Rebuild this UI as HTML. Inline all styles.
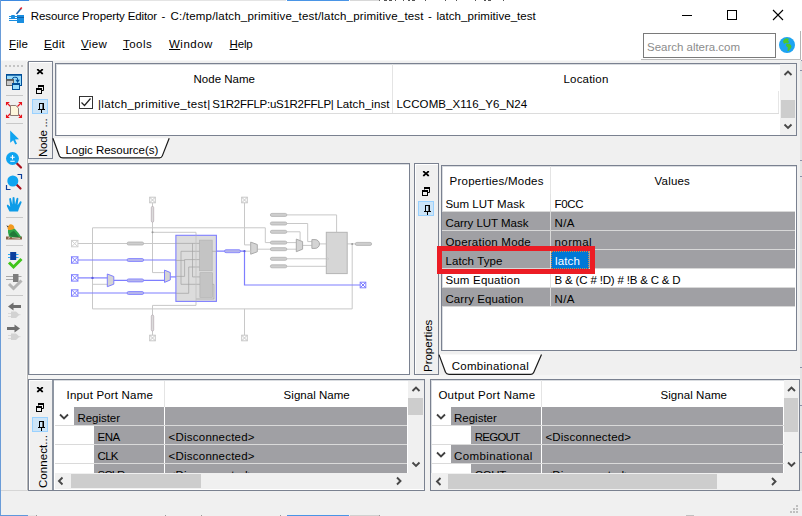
<!DOCTYPE html>
<html><head><meta charset="utf-8"><title>Resource Property Editor</title>
<style>
html,body{margin:0;padding:0;}
body{width:802px;height:516px;position:relative;overflow:hidden;background:#f0f0f0;font-family:"Liberation Sans",sans-serif;font-size:11.5px;}
.t{position:absolute;white-space:pre;line-height:14px;font-size:11.5px;}
.b{position:absolute;box-sizing:border-box;}
u{text-decoration:underline;text-underline-offset:1px;}
svg{position:absolute;left:0;top:0;overflow:visible;}
</style></head><body>
<div class="b" style="left:0px;top:0px;width:802px;height:61px;background:#fff"></div>
<div class="b" style="left:0px;top:60px;width:802px;height:1px;background:#f8f8f8"></div>
<div class="b" style="left:0px;top:0px;width:286px;height:1px;background:#e4e4e4"></div>
<div class="b" style="left:0px;top:0px;width:29px;height:1px;background:#3f8ae0"></div>
<div class="b" style="left:287px;top:0px;width:62px;height:1px;background:#4a95e6"></div>
<div class="b" style="left:350px;top:0px;width:29px;height:1px;background:#d8d8d8"></div>
<div class="b" style="left:379px;top:0px;width:1px;height:1px;background:#666"></div>
<div class="b" style="left:384px;top:0px;width:3px;height:1px;background:#555"></div>
<div class="b" style="left:389px;top:0px;width:3px;height:1px;background:#555"></div>
<div class="b" style="left:395px;top:0px;width:1px;height:1px;background:#555"></div>
<div class="b" style="left:403px;top:0px;width:1px;height:1px;background:#555"></div>
<div class="b" style="left:408px;top:0px;width:2px;height:1px;background:#555"></div>
<div class="b" style="left:412px;top:0px;width:3px;height:1px;background:#555"></div>
<div class="b" style="left:425px;top:0px;width:1px;height:1px;background:#555"></div>
<div class="b" style="left:445px;top:0px;width:1px;height:1px;background:#555"></div>
<div class="b" style="left:456px;top:0px;width:1px;height:1px;background:#555"></div>
<div class="b" style="left:475px;top:0px;width:1px;height:1px;background:#555"></div>
<div class="b" style="left:484px;top:0px;width:2px;height:1px;background:#555"></div>
<div class="b" style="left:488px;top:0px;width:3px;height:1px;background:#555"></div>
<div class="b" style="left:503px;top:0px;width:1px;height:1px;background:#555"></div>
<div class="b" style="left:0px;top:0px;width:1px;height:516px;background:#6a9cd8"></div>
<div class="b" style="left:1px;top:490px;width:27px;height:1px;background:#d6d6d6"></div>
<div class="b" style="left:26px;top:62px;width:1px;height:428px;background:#f8f8f8"></div>
<div class="b" style="left:27px;top:62px;width:1px;height:428px;background:#b8b8b8"></div>
<div class="b" style="left:0px;top:515px;width:28px;height:1px;background:#5f98dc"></div>
<div class="b" style="left:28px;top:515px;width:8px;height:1px;background:#e6e6e6"></div>
<div class="b" style="left:800px;top:31px;width:1px;height:29px;background:#b4b4b4"></div>
<div class="b" style="left:800px;top:60px;width:2px;height:431px;background:#e4e4e4"></div>
<div class="b" style="left:800px;top:60px;width:2px;height:1px;background:#8a8fa8"></div>
<div class="b" style="left:800px;top:70px;width:2px;height:1px;background:#8a8fa8"></div>
<div class="b" style="left:800px;top:160px;width:2px;height:1px;background:#8a8fa8"></div>
<div class="b" style="left:800px;top:176px;width:2px;height:1px;background:#8a8fa8"></div>
<div class="b" style="left:800px;top:367px;width:2px;height:1px;background:#8a8fa8"></div>
<div class="b" style="left:800px;top:405px;width:2px;height:1px;background:#8a8fa8"></div>
<div class="b" style="left:800px;top:452px;width:2px;height:1px;background:#8a8fa8"></div>
<div class="b" style="left:641px;top:59px;width:160px;height:1px;background:#bcbcbc"></div>
<div class="b" style="left:641px;top:60px;width:160px;height:1px;background:#f2f2f2"></div>
<span class="t" style="left:30.8px;top:9.0px;letter-spacing:-0.122px;color:#000;">Resource Property Editor</span>
<span class="t" style="left:161.4px;top:9.0px;letter-spacing:0.456px;color:#000;">-</span>
<span class="t" style="left:170.5px;top:9.0px;letter-spacing:0.198px;color:#000;">C:/temp/latch_primitive_test/latch_primitive_test</span>
<span class="t" style="left:428.0px;top:9.0px;letter-spacing:0.656px;color:#000;">-</span>
<span class="t" style="left:436.5px;top:9.0px;letter-spacing:0.043px;color:#000;">latch_primitive_test</span>
<span class="t" style="left:9.1px;top:36.8px;letter-spacing:0.092px;color:#000;"><u>F</u>ile</span>
<span class="t" style="left:44.1px;top:36.8px;letter-spacing:0.268px;color:#000;"><u>E</u>dit</span>
<span class="t" style="left:81.1px;top:36.8px;letter-spacing:0.295px;color:#000;"><u>V</u>iew</span>
<span class="t" style="left:122.9px;top:36.8px;letter-spacing:0.488px;color:#000;"><u>T</u>ools</span>
<span class="t" style="left:169.0px;top:36.8px;letter-spacing:0.482px;color:#000;"><u>W</u>indow</span>
<span class="t" style="left:229.6px;top:36.8px;letter-spacing:-0.189px;color:#000;"><u>H</u>elp</span>
<div class="b" style="left:643px;top:33px;width:133px;height:25px;border:1px solid #7a7a7a;background:#fff"></div>
<span class="t" style="left:647.0px;top:40.0px;letter-spacing:-0.019px;color:#8c8c8c;">Search altera.com</span>
<svg width="802" height="62" viewBox="0 0 802 62">
<path d="M682 15.5H692" stroke="#000" stroke-width="1" fill="none"/>
<rect x="727.5" y="10.5" width="9" height="9" stroke="#000" stroke-width="1" fill="none"/>
<path d="M773 10L783 20M783 10L773 20" stroke="#000" stroke-width="1.1" fill="none"/>
<!-- app icon -->
<path d="M16.5 14L21 8.5" stroke="#1c5fa8" stroke-width="1.6" fill="none"/>
<path d="M20.3 9.2L21.8 7.5" stroke="#e8242c" stroke-width="1.6" fill="none"/>
<rect x="17" y="15" width="7" height="8" fill="#1a8ee0"/>
<rect x="17" y="17" width="7" height="1" fill="#0e5fa8"/>
<path d="M9 16.5H17M9 18.5H17M9 20.5H17" stroke="#1a8ee0" stroke-width="1" fill="none"/>
<rect x="11" y="15" width="4" height="3.5" rx="1" fill="#1a8ee0"/>
<!-- globe -->
<circle cx="787" cy="45" r="8" fill="#1ea3f2"/>
<path d="M783 41.5Q783.500 39 786 38.300L789 38.800L788 40.500L789.300 42L787.500 43.500L785.500 43L784 44Z" fill="#4cc82c"/>
<path d="M786.300 44L789.500 43.800L791.500 46L791 48L788.500 51L787.500 51L787.800 47.500L786 46Z" fill="#4cc82c"/>
</svg>
<svg width="30" height="516" viewBox="0 0 30 516">
<rect x="5" y="65" width="2" height="2" fill="#c4c4c4"/>
<rect x="9" y="65" width="2" height="2" fill="#c4c4c4"/>
<rect x="13" y="65" width="2" height="2" fill="#c4c4c4"/>
<rect x="17" y="65" width="2" height="2" fill="#c4c4c4"/>
<rect x="21" y="65" width="2" height="2" fill="#c4c4c4"/>
<rect x="6" y="95" width="17" height="1" fill="#c8c8c8"/>
<rect x="6" y="123" width="17" height="1" fill="#c8c8c8"/>
<rect x="6" y="217" width="17" height="1" fill="#c8c8c8"/>
<rect x="6" y="245" width="17" height="1" fill="#c8c8c8"/>
<rect x="6" y="295" width="17" height="1" fill="#c8c8c8"/>
<rect x="6.500" y="74.500" width="15" height="11" fill="#9adcfb" stroke="#004e98" stroke-width="1"/>
<rect x="6" y="74" width="16" height="1.700" fill="#004e98"/>
<path d="M12.500 79Q12.500 77.300 14.500 77.300H16Q17.600 77.300 17.600 79V82.500" stroke="#004e98" stroke-width="1" fill="none"/>
<path d="M15.300 79.800H19.900L17.600 82.800Z" fill="#004e98"/>
<rect x="6.500" y="79.700" width="7" height="5.800" fill="#c8c8c8" stroke="#666" stroke-width="1"/>
<rect x="6" y="79.200" width="8" height="1.600" fill="#585858"/>
<rect x="12.500" y="83.500" width="7" height="6" fill="#9adcfb" stroke="#004e98" stroke-width="1"/>
<rect x="12" y="83" width="8" height="2" fill="#004e98"/>
<g stroke="#e8141c" stroke-width="1.100" fill="none">
<path d="M6.500 102.500l4 4M6.500 105.300v-2.800h2.800"/>
<path d="M21.500 102.500l-4 4M21.500 105.300v-2.800h-2.800"/>
<path d="M6.500 117.500l4-4M6.500 114.700v2.800h2.800"/>
<path d="M21.500 117.500l-4-4M21.500 114.700v2.800h-2.800"/>
</g>
<path d="M10.500 105.500H15.800L18.500 108.200V115.500H10.500Z" fill="#fdf6dc" stroke="#8c7b75" stroke-width="1"/>
<path d="M10.200 130.500V142.800L13.200 140.200L15.200 144.600L17 143.800L15 139.600L19 139.200Z" fill="#0fa4f0"/>
<path d="M16.500 163L21 167.500" stroke="#a8101c" stroke-width="2.200" stroke-linecap="round"/>
<circle cx="12.500" cy="158.500" r="6.500" fill="#0fa4f0"/>
<path d="M12.500 155v4.500M10.300 157.200h4.400M10.300 161.300h4.400" stroke="#fff" stroke-width="1.100" fill="none"/>
<path d="M16 184L20.500 188.500" stroke="#a8101c" stroke-width="2.200" stroke-linecap="round"/>
<circle cx="12.800" cy="181" r="5.500" fill="#0fa4f0"/>
<path d="M17.500 174.500h4v4.500M6.500 185v4.500h4" stroke="#0d3f9a" stroke-width="1.200" fill="none"/>
<path d="M9.500 211.500L7 206.500Q6.300 205 7.800 204.600L10.200 206.800L9.200 199Q9.600 197.600 10.900 198.200L12.300 204.500L12.600 197.600Q13.400 196.300 14.500 197.500L15 204.400L16.600 198.200Q17.800 197.300 18.400 198.600L17.600 205.200L20.200 201.300Q21.600 201 21.600 202.400L19 208.500L18 211.500Z" fill="#0d9ce8"/>
<path d="M6 236.500H22V239.500H6Z" fill="#8a6248"/>
<path d="M8 232.500Q7.500 227.500 11 227L15 229Q19 233 21.500 237.500L17 237Q12 238.500 9 236.500Z" fill="#2fa84a"/>
<path d="M9 235Q12 231 14 231Q17 234 19 237Q13 238 9 235Z" fill="#1f7a38"/>
<path d="M7.500 228.500Q8 224.500 11 224.300Q14 224.600 14.500 228.500Q11.500 230.500 8.500 230Z" fill="#f29a1e"/>
<path d="M6.300 225.300L8.500 226.200L7.800 227.500Z" fill="#333"/>
<path d="M10 237.500l-2 .8M12 237.700l8 .8" stroke="#e8dcd2" stroke-width=".8"/>
<path d="M8 254.500h2.500M8 257.500h2.500M16 254.500h2.500M16 257.500h2.500" stroke="#2aa8f2" stroke-width="1"/>
<rect x="10.200" y="252" width="6" height="8" fill="#0c3f9e"/>
<path d="M9 262.500L13.500 267L21.500 259" stroke="#3fc41a" stroke-width="3" fill="none"/>
<path d="M6 276.500h7M6 279.500h7M18 276.500h3.500" stroke="#a8a8a8" stroke-width="1"/>
<rect x="13" y="274" width="5.500" height="8" fill="#7c7c7c"/>
<path d="M9 284L13.500 288.500L21.500 280.500" stroke="#b4b4b4" stroke-width="3" fill="none"/>
<path d="M8 306.500L13.500 302.500V305H21V308H13.500V310.500Z" fill="#6e6e6e"/>
<path d="M11 311.500H16L19.500 314.700L16 318H11Z" fill="#d2d2d2"/>
<path d="M8 313.500h3M8 316.500h3M19 314.700h1.500" stroke="#d8d8d8" stroke-width="1"/>
<path d="M20 328.500L14.500 324.500V327H7V330H14.500V332.500Z" fill="#6e6e6e"/>
<path d="M11 333.500H16L19.500 336.700L16 340H11Z" fill="#d2d2d2"/>
<path d="M8 335.500h3M8 338.500h3M19 336.700h1.500" stroke="#d8d8d8" stroke-width="1"/>
</svg>
<div class="b" style="left:28px;top:61px;width:25px;height:98px;border:1px solid #7a8190;background:#f0f0f0;box-shadow:inset 1px 1px 0 #fff"></div>
<div class="b" style="left:32px;top:99px;width:16px;height:15px;background:#cce4f7;border:1px solid #99d1ff"></div>
<svg width="802" height="516" viewBox="0 0 802 516"><path d="M37.7 69.7L42.3 73.5M42.3 69.7L37.7 73.5" stroke="#000" stroke-width="1.700" fill="none"/><path d="M36.9 69.6H38.4M41.6 69.6H43.1M36.9 73.6H38.4M41.6 73.6H43.1" stroke="#000" stroke-width="1.2" fill="none"/><path d="M38.5 87.5V85.5H43.5V90.5H42" stroke="#000" stroke-width="1" fill="none"/><path d="M38 86.0H44" stroke="#000" stroke-width="2" fill="none"/><rect x="36.5" y="88.5" width="5" height="5" stroke="#000" stroke-width="1" fill="none"/><path d="M36 89.0H42" stroke="#000" stroke-width="2" fill="none"/><path d="M39 103.5H44M39.5 103.5V109.5M43.5 103.5V109.5M38 109.5H45M41.5 109.5V113" stroke="#000" stroke-width="1" fill="none"/><path d="M42.5 104V109" stroke="#6a6a6a" stroke-width="1" fill="none"/></svg>
<span class="t" style="left:35.5px;top:156.5px;letter-spacing:-0.223px;color:#000;transform-origin:0 0;transform:rotate(-90deg)">Node ...</span>
<div class="b" style="left:55px;top:63px;width:742px;height:73px;border:1px solid #7a8190;background:#fff;box-shadow:inset 1px 1px 0 #d9dce0"></div>
<div class="b" style="left:392px;top:64px;width:1px;height:49px;background:#e4e4e4"></div>
<div class="b" style="left:56px;top:113px;width:723px;height:1px;background:#dcdcdc"></div>
<div class="b" style="left:778px;top:91px;width:1px;height:22px;background:#e6e6e6"></div>
<span class="t" style="left:193.5px;top:71.5px;letter-spacing:0.014px;color:#000;">Node Name</span>
<span class="t" style="left:563.5px;top:71.5px;letter-spacing:0.189px;color:#000;">Location</span>
<span class="t" style="left:98.0px;top:97.0px;letter-spacing:0.368px;color:#000;">|latch_primitive_test|</span>
<span class="t" style="left:212.3px;top:97.0px;letter-spacing:-0.271px;color:#000;">S1R2FFLP:uS1R2FFLP|</span>
<span class="t" style="left:336.4px;top:97.0px;letter-spacing:0.076px;color:#000;">Latch_inst</span>
<span class="t" style="left:396.4px;top:97.0px;letter-spacing:0.074px;color:#000;">LCCOMB_X116_Y6_N24</span>
<div class="b" style="left:79px;top:96px;width:14px;height:13px;border:1px solid #333;background:#fff"></div>
<svg width="802" height="516" viewBox="0 0 802 516"><path d="M81.500 102.500L84.500 105.500L90.500 98.500" stroke="#222" stroke-width="1.200" fill="none"/></svg>
<div class="b" style="left:780px;top:64px;width:16px;height:71px;background:#f0f0f0"></div>
<div class="b" style="left:781px;top:100px;width:14px;height:18px;background:#cdcdcd"></div>
<svg width="802" height="516" viewBox="0 0 802 516"><path d="M784.5 75L788.0 71.5L791.5 75M784.5 124.5L788.0 128.0L791.5 124.5" stroke="#484848" stroke-width="1.900" fill="none"/></svg>
<svg width="802" height="516" viewBox="0 0 802 516"><path d="M52.9 138.2L59.4 155.9Q60.4 157.9 62.9 157.9H159.5Q161.5 157.9 162.3 155.9L169.2 138.2" stroke="#1a1a1a" stroke-width="1.200" fill="#fff"/></svg>
<span class="t" style="left:65.5px;top:142.5px;letter-spacing:-0.037px;color:#000;">Logic Resource(s)</span>
<div class="b" style="left:28px;top:163px;width:382px;height:212px;border:1px solid #7a8190;background:#fff;box-shadow:inset 1px 1px 0 #d9dce0"></div>
<svg width="802" height="516" viewBox="0 0 802 516">
<path d="M92.500 308.900V227.800H265.300V242.600H296.300" stroke="#c8c8c8" stroke-width="1" fill="none"/>
<path d="M92.500 308.900H352.200V243.900" stroke="#c8c8c8" stroke-width="1" fill="none"/>
<path d="M152.500 203V272.600H164.500" stroke="#c8c8c8" stroke-width="1" fill="none"/>
<path d="M152.500 232.300H196V305.400H152.500V335" stroke="#c8c8c8" stroke-width="1" fill="none"/>
<path d="M77.500 243.500H175.900" stroke="#c8c8c8" stroke-width="1" fill="none"/>
<path d="M92.500 284.300H107.900" stroke="#c8c8c8" stroke-width="1" fill="none"/>
<path d="M244.500 203V244.900H250.700" stroke="#c8c8c8" stroke-width="1" fill="none"/>
<path d="M244.500 308.900V335" stroke="#c8c8c8" stroke-width="1" fill="none"/>
<path d="M257.300 249.200H296.300" stroke="#c8c8c8" stroke-width="1" fill="none"/>
<path d="M286.800 214.900H336.600V232.300" stroke="#c8c8c8" stroke-width="1" fill="none"/>
<path d="M286.800 223.500H307.700V241.600H311.900" stroke="#c8c8c8" stroke-width="1" fill="none"/>
<path d="M286.800 231.800H300.100V240" stroke="#c8c8c8" stroke-width="1" fill="none"/>
<path d="M302.600 245.400H311.900" stroke="#c8c8c8" stroke-width="1" fill="none"/>
<path d="M319.500 243.900H326.300" stroke="#c8c8c8" stroke-width="1" fill="none"/>
<path d="M286.800 258.800H326.300" stroke="#c8c8c8" stroke-width="1" fill="none"/>
<path d="M286.800 266.300H326.300" stroke="#c8c8c8" stroke-width="1" fill="none"/>
<path d="M347.200 243.900H355.300" stroke="#c8c8c8" stroke-width="1" fill="none"/>
<rect x="175.900" y="235.300" width="40.500" height="66.100" fill="#dcdcdc" stroke="#7e7eff" stroke-width="1.100"/>
<rect x="199.400" y="240.100" width="12.800" height="30.700" fill="#c4c4c4" stroke="#b0b0b0" stroke-width=".6"/>
<rect x="199.900" y="272.700" width="12.700" height="24.700" fill="#c4c4c4" stroke="#b0b0b0" stroke-width=".6"/>
<path d="M175.800 243.400H199.400M192.500 243.400V276.900H199.900M181 284.300V251.300H199.400M181 284.300H199.900" stroke="#a2a2a2" stroke-width="0.7" fill="none"/>
<path d="M175.800 260.400H184.600M184.600 276.400V259.600H199.400M175.800 276.400H184.600M188.700 267H199.400M188.700 267V293.300M175.800 293.300H188.700" stroke="#a2a2a2" stroke-width="0.7" fill="none"/>
<path d="M212.600 284.300H213.900V299H196M212.200 251.300H216.300" stroke="#a2a2a2" stroke-width="0.7" fill="none"/>
<path d="M196 235.300V301.400" stroke="#c0c0c0" stroke-width="0.8" fill="none"/>
<rect x="326.300" y="232.300" width="20.900" height="41.300" fill="#d6d6d6" stroke="#b4b4b4" stroke-width="1"/>
<path d="M326.300 257L329 258.800L326.300 260.600" stroke="#c8c8c8" stroke-width="0.8" fill="none"/>
<path d="M250.7 242.1L257.3 244.51999999999998V251.78L250.7 254.2Z" fill="#d4d4d4" stroke="#aaa" stroke-width="1"/>
<path d="M296.3 239.1L302.6 241.62V249.17999999999998L296.3 251.7Z" fill="#d4d4d4" stroke="#aaa" stroke-width="1"/>
<path d="M311.900 239.600H315.100A4.400 4.400 0 0 1 315.100 248.400H311.900Z" fill="#d4d4d4" stroke="#aaa" stroke-width="1"/>
<rect x="270.4" y="213.4" width="16.400000000000034" height="3" rx="1.500" fill="#cecece" stroke="#b0b0b0" stroke-width=".8"/>
<rect x="270.4" y="222.0" width="16.400000000000034" height="3" rx="1.500" fill="#cecece" stroke="#b0b0b0" stroke-width=".8"/>
<rect x="270.4" y="230.3" width="16.400000000000034" height="3" rx="1.500" fill="#cecece" stroke="#b0b0b0" stroke-width=".8"/>
<rect x="270.4" y="241.1" width="16.400000000000034" height="3" rx="1.500" fill="#cecece" stroke="#b0b0b0" stroke-width=".8"/>
<rect x="270.4" y="247.7" width="16.400000000000034" height="3" rx="1.500" fill="#cecece" stroke="#b0b0b0" stroke-width=".8"/>
<rect x="270.4" y="257.3" width="16.400000000000034" height="3" rx="1.500" fill="#cecece" stroke="#b0b0b0" stroke-width=".8"/>
<rect x="270.4" y="264.8" width="16.400000000000034" height="3" rx="1.500" fill="#cecece" stroke="#b0b0b0" stroke-width=".8"/>
<rect x="355.3" y="242.4" width="16.30000000000001" height="3" rx="1.500" fill="#cecece" stroke="#b0b0b0" stroke-width=".8"/>
<rect x="127.1" y="242.0" width="16.5" height="3" rx="1.500" fill="#cecece" stroke="#b0b0b0" stroke-width=".8"/>
<rect x="151.3" y="206.4" width="2.400" height="15.799999999999983" rx="1.200" fill="#dcdcdc" stroke="#b4a8b0" stroke-width=".7"/>
<rect x="151.3" y="315" width="2.400" height="16" rx="1.200" fill="#dcdcdc" stroke="#b4a8b0" stroke-width=".7"/>
<path d="M77.500 260H175.900" stroke="#7e7eff" stroke-width="1.2" fill="none"/>
<path d="M77.500 277.900H107.900" stroke="#7e7eff" stroke-width="1.2" fill="none"/>
<path d="M113.800 280.400H164.500" stroke="#7e7eff" stroke-width="1.2" fill="none"/>
<path d="M77.500 293H175.900" stroke="#7e7eff" stroke-width="1.2" fill="none"/>
<path d="M170.300 276.900H175.900" stroke="#7e7eff" stroke-width="1.2" fill="none"/>
<path d="M216.700 251.200H244.500V285H360" stroke="#7e7eff" stroke-width="1.2" fill="none"/>
<path d="M244.500 251.200H250.700" stroke="#c8c8c8" stroke-width="1" fill="none"/>
<path d="M107.3 274L113.8 276.54V284.15999999999997L107.3 286.7Z" fill="#d4d4d4" stroke="#7e7eff" stroke-width="1"/>
<path d="M164.5 270.1L170.3 272.56V279.94L164.5 282.4Z" fill="#d4d4d4" stroke="#7e7eff" stroke-width="1"/>
<rect x="127.1" y="258.5" width="16.5" height="3" rx="1.500" fill="#b4b4ec" stroke="#7e7eff" stroke-width=".8"/>
<rect x="127.1" y="278.9" width="16.5" height="3" rx="1.500" fill="#b4b4ec" stroke="#7e7eff" stroke-width=".8"/>
<rect x="127.1" y="291.5" width="16.5" height="3" rx="1.500" fill="#b4b4ec" stroke="#7e7eff" stroke-width=".8"/>
<rect x="224.5" y="249.7" width="16.0" height="3" rx="1.500" fill="#b4b4ec" stroke="#7e7eff" stroke-width=".8"/>
<circle cx="92.500" cy="277.900" r="1.200" fill="#5a5ae0"/><circle cx="152.500" cy="232.300" r="1" fill="#999"/><circle cx="352.200" cy="243.900" r="1" fill="#999"/><circle cx="244.500" cy="251.200" r="1.100" fill="#5a5ae0"/>
<rect x="71.5" y="240.4" width="6.4" height="6.4" fill="#fff" stroke="#d0d0d0" stroke-width="1"/><path d="M71.5 240.4L77.9 246.79999999999998M77.9 240.4L71.5 246.79999999999998" stroke="#d0d0d0" stroke-width="1" fill="none"/>
<rect x="71.5" y="256.8" width="6.4" height="6.4" fill="#fff" stroke="#7e7eff" stroke-width="1"/><path d="M71.5 256.8L77.9 263.2M77.9 256.8L71.5 263.2" stroke="#7e7eff" stroke-width="1" fill="none"/>
<rect x="71.5" y="274.7" width="6.4" height="6.4" fill="#fff" stroke="#7e7eff" stroke-width="1"/><path d="M71.5 274.7L77.9 281.09999999999997M77.9 274.7L71.5 281.09999999999997" stroke="#7e7eff" stroke-width="1" fill="none"/>
<rect x="71.5" y="289.8" width="6.4" height="6.4" fill="#fff" stroke="#7e7eff" stroke-width="1"/><path d="M71.5 289.8L77.9 296.2M77.9 289.8L71.5 296.2" stroke="#7e7eff" stroke-width="1" fill="none"/>
<rect x="149.7" y="197.2" width="5.6" height="5.6" fill="#fff" stroke="#c8c8c8" stroke-width="1"/><path d="M149.7 197.2L155.3 202.8M155.3 197.2L149.7 202.8" stroke="#c8c8c8" stroke-width="1" fill="none"/>
<rect x="241.7" y="197.2" width="5.6" height="5.6" fill="#fff" stroke="#c8c8c8" stroke-width="1"/><path d="M241.7 197.2L247.3 202.8M247.3 197.2L241.7 202.8" stroke="#c8c8c8" stroke-width="1" fill="none"/>
<rect x="149.7" y="335.2" width="5.6" height="5.6" fill="#fff" stroke="#c8c8c8" stroke-width="1"/><path d="M149.7 335.2L155.3 340.8M155.3 335.2L149.7 340.8" stroke="#c8c8c8" stroke-width="1" fill="none"/>
<rect x="241.7" y="335.2" width="5.6" height="5.6" fill="#fff" stroke="#c8c8c8" stroke-width="1"/><path d="M241.7 335.2L247.3 340.8M247.3 335.2L241.7 340.8" stroke="#c8c8c8" stroke-width="1" fill="none"/>
<rect x="360.2" y="282.2" width="5.6" height="5.6" fill="#fff" stroke="#7e7eff" stroke-width="1"/><path d="M360.2 282.2L365.8 287.8M365.8 282.2L360.2 287.8" stroke="#7e7eff" stroke-width="1" fill="none"/>
</svg>
<div class="b" style="left:414px;top:163px;width:25px;height:212px;border:1px solid #7a8190;background:#f0f0f0;box-shadow:inset 1px 1px 0 #fff"></div>
<div class="b" style="left:418px;top:201px;width:16px;height:15px;background:#cce4f7;border:1px solid #99d1ff"></div>
<svg width="802" height="516" viewBox="0 0 802 516"><path d="M423.7 171.7L428.3 175.5M428.3 171.7L423.7 175.5" stroke="#000" stroke-width="1.700" fill="none"/><path d="M422.9 171.6H424.4M427.6 171.6H429.1M422.9 175.6H424.4M427.6 175.6H429.1" stroke="#000" stroke-width="1.2" fill="none"/><path d="M424.5 189.5V187.5H429.5V192.5H428" stroke="#000" stroke-width="1" fill="none"/><path d="M424 188.0H430" stroke="#000" stroke-width="2" fill="none"/><rect x="422.5" y="190.5" width="5" height="5" stroke="#000" stroke-width="1" fill="none"/><path d="M422 191.0H428" stroke="#000" stroke-width="2" fill="none"/><path d="M425 205.5H430M425.5 205.5V211.5M429.5 205.5V211.5M424 211.5H431M427.5 211.5V215" stroke="#000" stroke-width="1" fill="none"/><path d="M428.5 206V211" stroke="#6a6a6a" stroke-width="1" fill="none"/></svg>
<span class="t" style="left:421.0px;top:372.3px;letter-spacing:-0.012px;color:#000;transform-origin:0 0;transform:rotate(-90deg)">Properties</span>
<div class="b" style="left:441px;top:165px;width:356px;height:186px;border:1px solid #7a8190;background:#fff;box-shadow:inset 1px 1px 0 #d9dce0"></div>
<div class="b" style="left:550px;top:193px;width:1px;height:18px;background:#e0e0e0"></div>
<span class="t" style="left:445.4px;top:197.0px;letter-spacing:0.022px;color:#000;">Sum LUT Mask</span>
<span class="t" style="left:554.6px;top:197.0px;letter-spacing:-0.333px;color:#000;">F0CC</span>
<div class="b" style="left:442px;top:211px;width:353px;height:20px;background:#d8d8d8"></div>
<div class="b" style="left:442px;top:212px;width:108px;height:18px;background:#a0a0a4"></div>
<div class="b" style="left:551px;top:212px;width:244px;height:18px;background:#a0a0a4"></div>
<span class="t" style="left:445.4px;top:216.0px;letter-spacing:-0.036px;color:#000;">Carry LUT Mask</span>
<span class="t" style="left:554.6px;top:216.0px;letter-spacing:0.276px;color:#000;">N/A</span>
<div class="b" style="left:442px;top:230px;width:353px;height:20px;background:#d8d8d8"></div>
<div class="b" style="left:442px;top:231px;width:108px;height:18px;background:#a0a0a4"></div>
<div class="b" style="left:551px;top:231px;width:244px;height:18px;background:#a0a0a4"></div>
<span class="t" style="left:445.4px;top:235.0px;letter-spacing:0.224px;color:#000;">Operation Mode</span>
<span class="t" style="left:554.6px;top:235.0px;letter-spacing:0.374px;color:#000;">normal</span>
<div class="b" style="left:442px;top:249px;width:353px;height:20px;background:#d8d8d8"></div>
<div class="b" style="left:442px;top:250px;width:108px;height:18px;background:#a0a0a4"></div>
<div class="b" style="left:551px;top:250px;width:244px;height:18px;background:#a0a0a4"></div>
<span class="t" style="left:445.4px;top:254.0px;letter-spacing:0.114px;color:#000;">Latch Type</span>
<div class="b" style="left:551px;top:251px;width:38px;height:18px;background:#0078d7;border:1px dotted #d08848"></div>
<span class="t" style="left:555.0px;top:254.0px;letter-spacing:0.141px;color:#fff;">latch</span>
<div class="b" style="left:550px;top:269px;width:1px;height:18px;background:#e0e0e0"></div>
<span class="t" style="left:445.4px;top:273.0px;letter-spacing:0.196px;color:#000;">Sum Equation</span>
<span class="t" style="left:554.6px;top:273.0px;letter-spacing:-0.179px;color:#000;">B &amp; (C # !D) # !B &amp; C &amp; D</span>
<div class="b" style="left:442px;top:287px;width:353px;height:20px;background:#d8d8d8"></div>
<div class="b" style="left:442px;top:288px;width:108px;height:18px;background:#a0a0a4"></div>
<div class="b" style="left:551px;top:288px;width:244px;height:18px;background:#a0a0a4"></div>
<span class="t" style="left:445.4px;top:292.0px;letter-spacing:0.099px;color:#000;">Carry Equation</span>
<span class="t" style="left:554.6px;top:292.0px;letter-spacing:0.276px;color:#000;">N/A</span>
<div class="b" style="left:550px;top:166px;width:1px;height:28px;background:#e4e4e4"></div>
<span class="t" style="left:449.5px;top:173.5px;letter-spacing:0.255px;color:#000;">Properties/Modes</span>
<span class="t" style="left:654.6px;top:173.6px;letter-spacing:0.181px;color:#000;">Values</span>
<div class="b" style="left:437px;top:246px;width:158px;height:28px;border:5px solid #ec1c24"></div>
<svg width="802" height="516" viewBox="0 0 802 516"><path d="M439 354.6L445.5 372.3Q446.5 374.3 449 374.3H531Q533 374.3 533.8 372.3L541.5 354.6" stroke="#1a1a1a" stroke-width="1.200" fill="#fff"/></svg>
<span class="t" style="left:451.7px;top:358.7px;letter-spacing:0.291px;color:#000;">Combinational</span>
<div class="b" style="left:28px;top:375px;width:772px;height:4px;background:#f5f5f5"></div>
<div class="b" style="left:28px;top:379px;width:397px;height:112px;border:1px solid #7a8190;background:#fff;box-shadow:inset 1px 1px 0 #d9dce0"></div>
<div class="b" style="left:29px;top:380px;width:23px;height:110px;background:#f0f0f0;box-shadow:inset 1px 1px 0 #fff"></div>
<div class="b" style="left:52px;top:380px;width:2px;height:110px;background:#8e96a2"></div>
<div class="b" style="display:none;left:-100px;top:380px;width:25px;height:111px;border:1px solid #7a8190;background:#f0f0f0;box-shadow:inset 1px 1px 0 #fff"></div>
<div class="b" style="left:32px;top:417px;width:16px;height:15px;background:#cce4f7;border:1px solid #99d1ff"></div>
<svg width="802" height="516" viewBox="0 0 802 516"><path d="M37.7 387.7L42.3 391.5M42.3 387.7L37.7 391.5" stroke="#000" stroke-width="1.700" fill="none"/><path d="M36.9 387.6H38.4M41.6 387.6H43.1M36.9 391.6H38.4M41.6 391.6H43.1" stroke="#000" stroke-width="1.2" fill="none"/><path d="M38.5 405.5V403.5H43.5V408.5H42" stroke="#000" stroke-width="1" fill="none"/><path d="M38 404.0H44" stroke="#000" stroke-width="2" fill="none"/><rect x="36.5" y="406.5" width="5" height="5" stroke="#000" stroke-width="1" fill="none"/><path d="M36 407.0H42" stroke="#000" stroke-width="2" fill="none"/><path d="M39 421.5H44M39.5 421.5V427.5M43.5 421.5V427.5M38 427.5H45M41.5 427.5V431" stroke="#000" stroke-width="1" fill="none"/><path d="M42.5 422V427" stroke="#6a6a6a" stroke-width="1" fill="none"/></svg>
<span class="t" style="left:35.5px;top:488.0px;letter-spacing:0.058px;color:#000;transform-origin:0 0;transform:rotate(-90deg)">Connect...</span>
<div class="b" style="left:55px;top:381px;width:352px;height:92px;overflow:hidden"><div class="b" style="left:19px;top:26px;width:90px;height:18px;background:#a0a0a4"></div><div class="b" style="left:110px;top:26px;width:243px;height:18px;background:#a0a0a4"></div><span class="t" style="left:22.4px;top:29.6px;letter-spacing:-0.029px;color:#000;">Register</span>
<div class="b" style="left:-2px;top:44px;width:400px;height:1px;background:#dadada"></div><div class="b" style="left:39px;top:45px;width:70px;height:18px;background:#a0a0a4"></div><div class="b" style="left:110px;top:45px;width:243px;height:18px;background:#a0a0a4"></div><span class="t" style="left:42.6px;top:48.6px;letter-spacing:-0.585px;color:#000;">ENA</span>
<span class="t" style="left:113.6px;top:48.6px;letter-spacing:0.220px;color:#000;">&lt;Disconnected&gt;</span>
<div class="b" style="left:-2px;top:63px;width:400px;height:1px;background:#dadada"></div><div class="b" style="left:39px;top:64px;width:70px;height:18px;background:#a0a0a4"></div><div class="b" style="left:110px;top:64px;width:243px;height:18px;background:#a0a0a4"></div><span class="t" style="left:42.6px;top:67.6px;letter-spacing:-0.758px;color:#000;">CLK</span>
<span class="t" style="left:113.6px;top:67.6px;letter-spacing:0.220px;color:#000;">&lt;Disconnected&gt;</span>
<div class="b" style="left:-2px;top:82px;width:400px;height:1px;background:#dadada"></div><div class="b" style="left:39px;top:83px;width:70px;height:18px;background:#a0a0a4"></div><div class="b" style="left:110px;top:83px;width:243px;height:18px;background:#a0a0a4"></div><span class="t" style="left:42.6px;top:86.6px;letter-spacing:-0.947px;color:#000;">SCLR</span>
<span class="t" style="left:113.6px;top:86.6px;letter-spacing:0.220px;color:#000;">&lt;Disconnected&gt;</span>
<div class="b" style="left:-2px;top:101px;width:400px;height:1px;background:#dadada"></div></div>
<div class="b" style="left:164px;top:381px;width:1px;height:26px;background:#e4e4e4"></div>
<svg width="802" height="516" viewBox="0 0 802 516"><path d="M60 414.5L64 418.5L68 414.5" stroke="#404040" stroke-width="1.800" fill="none"/></svg>
<span class="t" style="left:66.6px;top:388.0px;letter-spacing:0.178px;color:#000;">Input Port Name</span>
<span class="t" style="left:283.6px;top:387.8px;letter-spacing:0.032px;color:#000;">Signal Name</span>
<div class="b" style="left:408px;top:381px;width:16px;height:92px;background:#f0f0f0"></div>
<div class="b" style="left:408px;top:397.7px;width:15px;height:17px;background:#cdcdcd"></div>
<svg width="802" height="516" viewBox="0 0 802 516"><path d="M412.5 391L416.0 387.5L419.5 391M412.5 462.5L416.0 466.0L419.5 462.5" stroke="#484848" stroke-width="1.900" fill="none"/></svg>
<div class="b" style="left:55px;top:473px;width:353px;height:16px;background:#f0f0f0"></div>
<div class="b" style="left:71px;top:474px;width:130px;height:14px;background:#cdcdcd"></div>
<svg width="802" height="516" viewBox="0 0 802 516"><path d="M62.5 477.5L59.0 481.0L62.5 484.5M397 477.5L400.5 481.0L397 484.5" stroke="#484848" stroke-width="1.900" fill="none"/></svg>
<div class="b" style="left:408px;top:473px;width:16px;height:16px;background:#f0f0f0"></div>
<div class="b" style="left:430px;top:379px;width:370px;height:112px;border:1px solid #7a8190;background:#fff;box-shadow:inset 1px 1px 0 #d9dce0"></div>
<div class="b" style="left:431px;top:380px;width:353px;height:93px;overflow:hidden"><div class="b" style="left:20px;top:27px;width:90px;height:18px;background:#a0a0a4"></div><div class="b" style="left:111px;top:27px;width:241px;height:18px;background:#a0a0a4"></div><span class="t" style="left:23.0px;top:30.6px;letter-spacing:-0.004px;color:#000;">Register</span>
<div class="b" style="left:-2px;top:45px;width:400px;height:1px;background:#dadada"></div><div class="b" style="left:40px;top:46px;width:70px;height:18px;background:#a0a0a4"></div><div class="b" style="left:111px;top:46px;width:241px;height:18px;background:#a0a0a4"></div><span class="t" style="left:43.7px;top:49.6px;letter-spacing:-0.734px;color:#000;">REGOUT</span>
<span class="t" style="left:114.4px;top:49.6px;letter-spacing:0.198px;color:#000;">&lt;Disconnected&gt;</span>
<div class="b" style="left:-2px;top:64px;width:400px;height:1px;background:#dadada"></div><div class="b" style="left:20px;top:65px;width:90px;height:18px;background:#a0a0a4"></div><div class="b" style="left:111px;top:65px;width:241px;height:18px;background:#a0a0a4"></div><span class="t" style="left:23.0px;top:68.6px;letter-spacing:0.406px;color:#000;">Combinational</span>
<div class="b" style="left:-2px;top:83px;width:400px;height:1px;background:#dadada"></div><div class="b" style="left:40px;top:84px;width:70px;height:18px;background:#a0a0a4"></div><div class="b" style="left:111px;top:84px;width:241px;height:18px;background:#a0a0a4"></div><span class="t" style="left:43.7px;top:87.6px;letter-spacing:-0.323px;color:#000;">COUT</span>
<span class="t" style="left:114.4px;top:87.6px;letter-spacing:0.198px;color:#000;">&lt;Disconnected&gt;</span>
<div class="b" style="left:-2px;top:102px;width:400px;height:1px;background:#dadada"></div></div>
<div class="b" style="left:541px;top:380px;width:1px;height:27px;background:#e4e4e4"></div>
<svg width="802" height="516" viewBox="0 0 802 516"><path d="M437 414.5L441 418.5L445 414.5" stroke="#404040" stroke-width="1.800" fill="none"/></svg>
<svg width="802" height="516" viewBox="0 0 802 516"><path d="M437 452.5L441 456.5L445 452.5" stroke="#404040" stroke-width="1.800" fill="none"/></svg>
<span class="t" style="left:438.4px;top:388.0px;letter-spacing:0.270px;color:#000;">Output Port Name</span>
<span class="t" style="left:660.5px;top:387.8px;letter-spacing:0.060px;color:#000;">Signal Name</span>
<div class="b" style="left:784px;top:380px;width:15px;height:93px;background:#f0f0f0"></div>
<div class="b" style="left:784px;top:397.5px;width:14px;height:34px;background:#cdcdcd"></div>
<svg width="802" height="516" viewBox="0 0 802 516"><path d="M788.0 391L791.5 387.5L795.0 391M788.0 462.5L791.5 466.0L795.0 462.5" stroke="#484848" stroke-width="1.900" fill="none"/></svg>
<div class="b" style="left:431px;top:473px;width:353px;height:17px;background:#f0f0f0"></div>
<div class="b" style="left:448px;top:474px;width:269px;height:15px;background:#cdcdcd"></div>
<svg width="802" height="516" viewBox="0 0 802 516"><path d="M440.5 478.0L437.0 481.5L440.5 485.0M772 478.0L775.5 481.5L772 485.0" stroke="#484848" stroke-width="1.900" fill="none"/></svg>
<div class="b" style="left:784px;top:473px;width:15px;height:17px;background:#f0f0f0"></div>
<svg width="802" height="516" viewBox="0 0 802 516"><rect x="796" y="505" width="2" height="2" fill="#bfbfbf"/><rect x="793" y="508" width="2" height="2" fill="#bfbfbf"/><rect x="796" y="508" width="2" height="2" fill="#bfbfbf"/><rect x="790" y="511" width="2" height="2" fill="#bfbfbf"/><rect x="793" y="511" width="2" height="2" fill="#bfbfbf"/><rect x="796" y="511" width="2" height="2" fill="#bfbfbf"/></svg>
<div class="b" style="left:36px;top:515px;width:1px;height:1px;background:#999"></div>
<div class="b" style="left:165px;top:515px;width:1px;height:1px;background:#999"></div>
<div class="b" style="left:201px;top:515px;width:1px;height:1px;background:#999"></div>
<div class="b" style="left:280px;top:515px;width:1px;height:1px;background:#999"></div>
<div class="b" style="left:379px;top:515px;width:1px;height:1px;background:#999"></div>
<div class="b" style="left:287px;top:515px;width:62px;height:1px;background:#4a95e6"></div>
<div class="b" style="left:350px;top:515px;width:29px;height:1px;background:#d0d0d0"></div>
<div class="b" style="left:686px;top:515px;width:8px;height:1px;background:#c0c0c0"></div>
</body></html>
